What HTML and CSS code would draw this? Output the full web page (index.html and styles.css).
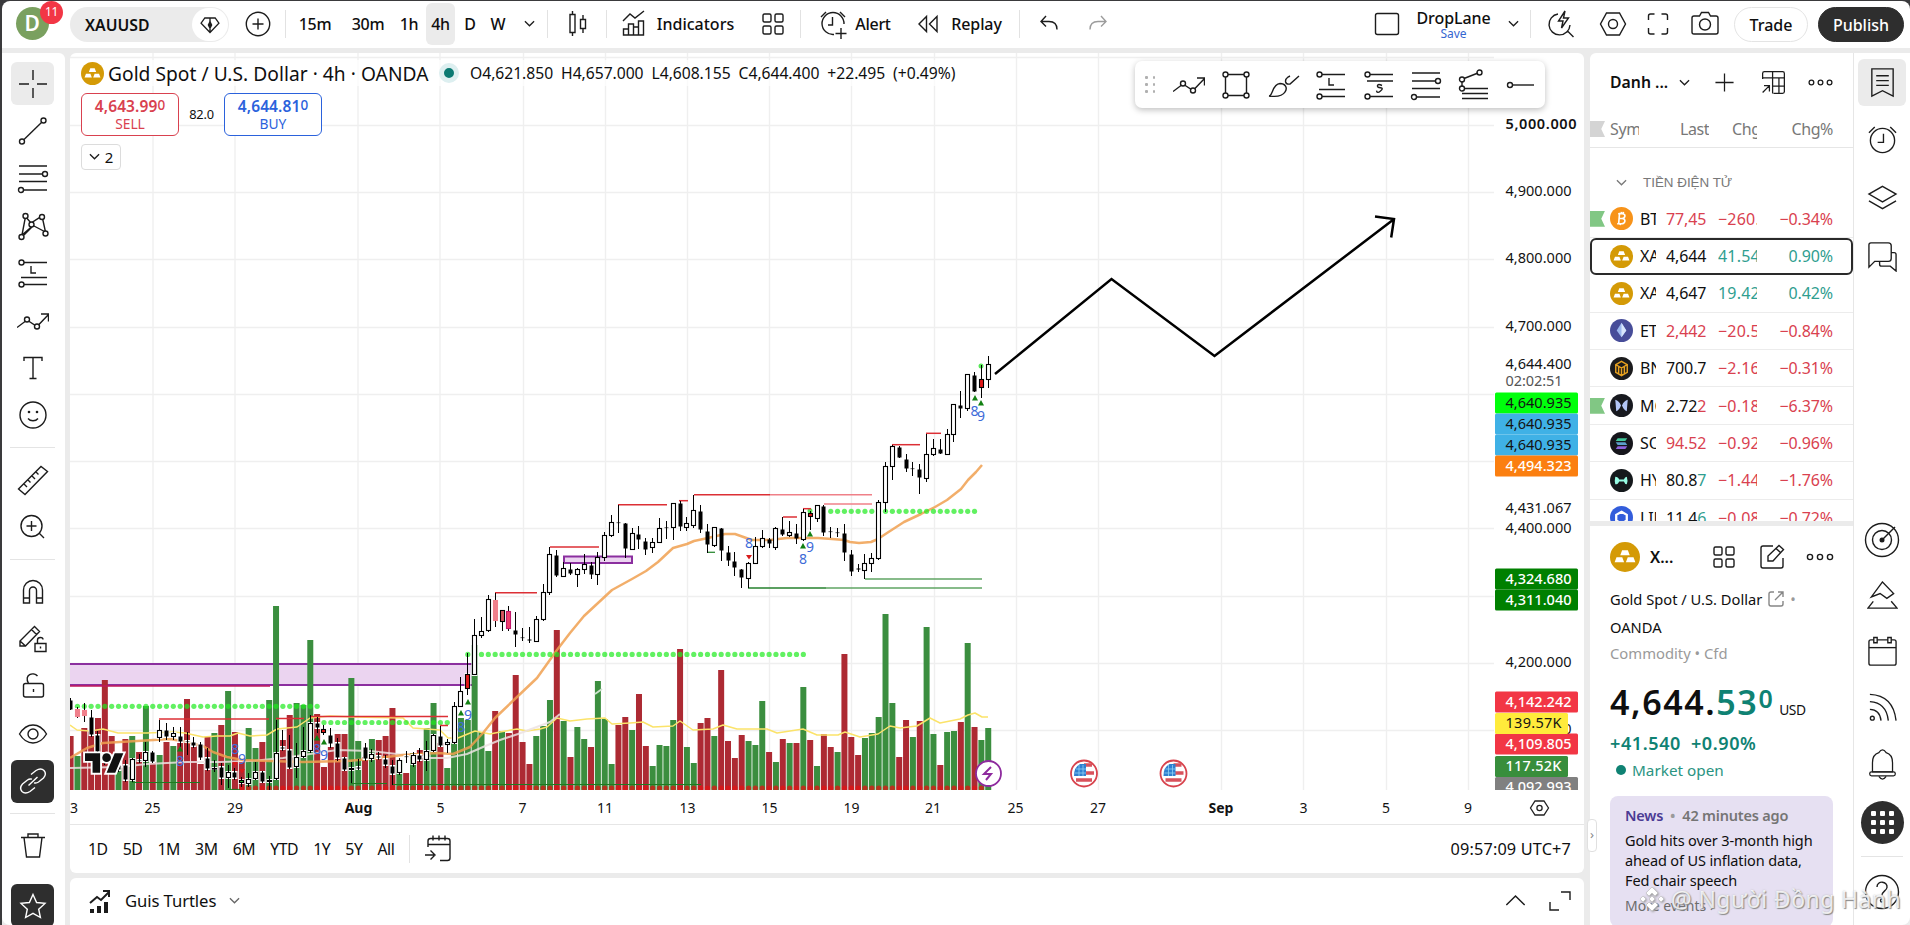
FILE: index.html
```html
<!DOCTYPE html>
<html lang="en">
<head>
  <meta charset="UTF-8">
  <meta name="viewport" content="width=device-width, initial-scale=1.0">
  <title>XAUUSD 4,644.400</title>
  <link rel="stylesheet" href="styles.css">
</head>
<body>
  <svg class="sprite" xmlns="http://www.w3.org/2000/svg">
    <symbol id="i-chev" viewBox="0 0 12 12"><path d="M1 3.5l5 5 5-5"/></symbol>
    <symbol id="i-plus" viewBox="0 0 32 32"><path d="M16 6v20M6 16h20"/></symbol>
    <symbol id="i-pluscircle" viewBox="0 0 32 32"><circle cx="16" cy="16" r="11.7"/><path d="M16 10.500v11M10.500 16h11"/></symbol>
    <symbol id="i-gem" viewBox="0 0 32 32"><path d="M10.500 8.500h11l4 5.500L16 24 6.500 14zM16 8.500v4M16 20v4"/><path class="solid" d="M16 11l2.500 5-2.500 5-2.500-5z"/></symbol>
    <symbol id="i-candles" viewBox="0 0 32 32"><path d="M8 6.500h5v18H8zM10.500 3v3.500M10.500 24.500V28M18.500 11.500h5v9h-5zM21 7v4.500M21 20.500V25"/></symbol>
    <symbol id="i-indic" viewBox="0 0 32 32"><path d="M5 13l7-7 5 4 9-7M5.500 27v-6h5v6zM10.500 27V16h5v11M15.500 27v-8h5v8M20.500 27V13h5v14H5"/></symbol>
    <symbol id="i-grid" viewBox="0 0 32 32"><rect x="6" y="6" width="8" height="8" rx="1.500"/><rect x="18" y="6" width="8" height="8" rx="1.500"/><rect x="6" y="18" width="8" height="8" rx="1.500"/><rect x="18" y="18" width="8" height="8" rx="1.500"/></symbol>
    <symbol id="i-alertplus" viewBox="0 0 32 32"><path d="M17 26.500A11 11 0 1 1 27 16M15.500 9v8H11M4 9l5-5M23 4l5 5M24 20v11M18.500 25.500h11"/></symbol>
    <symbol id="i-alarm" viewBox="0 0 32 32"><circle cx="16" cy="17" r="12.500"/><path d="M17 10v9h-6M2 9l6-6M24 3l6 6"/></symbol>
    <symbol id="i-replay" viewBox="0 0 32 32"><path d="M14.500 8.500v15L7 16zM25 8.500v15L17.500 16z"/></symbol>
    <symbol id="i-undo" viewBox="0 0 32 32"><path d="M12 8l-5 5.500 5 5M7 13.500h8c5 0 8 2.500 8 8"/></symbol>
    <symbol id="i-redo" viewBox="0 0 32 32"><path d="M20 8l5 5.500-5 5M25 13.500h-8c-5 0-8 2.500-8 8"/></symbol>
    <symbol id="i-square" viewBox="0 0 32 32"><rect x="4.500" y="5.500" width="23" height="21" rx="2"/></symbol>
    <symbol id="i-flash" viewBox="0 0 32 32"><path d="M13 6A10.500 10.500 0 1 0 25 17M22.500 23l6 6M20 3l-6.500 10h4.500l-1.500 7 7-10h-5z"/></symbol>
    <symbol id="i-hex" viewBox="0 0 32 32"><path d="M9.500 5h13L28.500 16l-6 11h-13L3.500 16z"/><circle cx="16" cy="16" r="4.500"/></symbol>
    <symbol id="i-full" viewBox="0 0 32 32"><path d="M6.500 12V8q0-2 2-2h4M19.500 6h4q2 0 2 2v4M25.500 20v4q0 2-2 2h-4M12.500 26h-4q-2 0-2-2v-4"/></symbol>
    <symbol id="i-camera" viewBox="0 0 32 32"><path d="M5 8h5.500l2-3.500h7l2 3.500H27q2 0 2 2v14q0 2-2 2H5q-2 0-2-2V10q0-2 2-2z"/><circle cx="16" cy="16.500" r="5.500"/></symbol>
    <symbol id="i-cross" viewBox="0 0 32 32"><path d="M16 2v10M16 20v10M2 16h10M20 16h10"/></symbol>
    <symbol id="i-line" viewBox="0 0 32 32"><circle cx="5" cy="26.500" r="2.500"/><circle cx="26.500" cy="5.500" r="2.500"/><path d="M7 24.500L24.500 7.500"/></symbol>
    <symbol id="i-fib" viewBox="0 0 32 32"><path d="M2 4h28M2 12h23.500M2 19.500h28M6.500 28H30"/><circle cx="28" cy="12" r="2.500"/><circle cx="4" cy="28" r="2.500"/></symbol>
    <symbol id="i-pattern" viewBox="0 0 32 32"><path d="M5 25L8.500 6.500 14 13l11-7 3.500 16L16 15.500zM7 25l8-8"/><circle class="hole" cx="8.500" cy="6" r="2.500"/><circle class="hole" cx="4.500" cy="27" r="2.500"/><circle class="hole" cx="14.500" cy="14.500" r="2.500"/><circle class="hole" cx="25" cy="7" r="2.500"/><circle class="hole" cx="28.500" cy="23.500" r="2.500"/></symbol>
    <symbol id="i-long" viewBox="0 0 32 32"><path d="M7 5.500h23M4 20.500h26M7 27.500h23M14 9v7h5"/><circle cx="4.500" cy="5.500" r="2.500"/><circle cx="4.500" cy="27.500" r="2.500"/></symbol>
    <symbol id="i-short" viewBox="0 0 32 32"><path d="M7 5.500h23M4 12h26M7 27.500h23M19 16.500q-4-2-4.500 0t3 2.300 0 3.200-4-.4"/><circle cx="4.500" cy="5.500" r="2.500"/><circle cx="4.500" cy="27.500" r="2.500"/></symbol>
    <symbol id="i-zig" viewBox="0 0 32 32"><path d="M0 22.500l10-7.500 10 6.500L31.500 9.500M24 9h7.500v7.500"/><circle class="hole" cx="10" cy="14.500" r="2.500"/><circle class="hole" cx="20" cy="21.500" r="2.500"/></symbol>
    <symbol id="i-text" viewBox="0 0 32 32"><path d="M7 9V5.500h18V9M16 5.500v21M12.500 26.500h7"/></symbol>
    <symbol id="i-smile" viewBox="0 0 32 32"><circle cx="16" cy="16" r="13"/><path d="M11 19.500c2.500 3 7.500 3 10 0"/><circle class="solid" cx="12" cy="13" r="1.300"/><circle class="solid" cx="20" cy="13" r="1.300"/></symbol>
    <symbol id="i-ruler" viewBox="0 0 32 32"><path d="M1.500 25L24 2.500l6.500 5L8 30.500zM7 20l3 3M11 16l2.500 2.500M15 12l3 3M19 8l2.500 2.500"/></symbol>
    <symbol id="i-zoom" viewBox="0 0 32 32"><circle cx="14.500" cy="15" r="10.500"/><path d="M22 22l5 5M14.500 10v10M9.500 15h10"/></symbol>
    <symbol id="i-magnet" viewBox="0 0 32 32"><path d="M6.500 27V14a9.500 9.500 0 0 1 19 0v13h-6V14.500a3.500 3.500 0 0 0-7 0V27zM6.500 22h6M19.500 22h6"/></symbol>
    <symbol id="i-penlock" viewBox="0 0 32 32"><path d="M3 23v-5L17.500 3.500l5 5L8.500 23zM14.500 6.500l5 5M3 18l5.500 5M18 20.500h11v8H18zM20.500 20.500V17q0-2.500 3-2.500 2.500 0 2.500 2M23.500 23.500v2"/></symbol>
    <symbol id="i-lock" viewBox="0 0 32 32"><rect x="6.500" y="13.500" width="20" height="13.500" rx="2"/><path d="M11.500 13.500c-5-9 5-12 9-7.500M16.500 19v3"/></symbol>
    <symbol id="i-eye" viewBox="0 0 32 32"><path d="M2.500 16q5.500-9 13.500-9t13.500 9q-5.500 9-13.500 9T2.500 16z"/><circle cx="16" cy="16" r="5"/></symbol>
    <symbol id="i-link" viewBox="0 0 32 32"><path d="M14 9.500l5-4q5-3 8 0 3 3.500-.5 7.500l-5 4q-2 1.500-4.500.8M18 22.500l-5 4q-5 3-8 0-3-3.500.5-7.500l5-4q2-1.500 4.500-.8M11.500 20.500l9-8.500"/></symbol>
    <symbol id="i-trash" viewBox="0 0 32 32"><path d="M4 7.500h24M7 7.500L9.500 27h13L25 7.500M11 7.500V4h10v3.500"/></symbol>
    <symbol id="i-star" viewBox="0 0 32 32"><path d="M16 4.500l3.600 8 8.400.9-6.300 5.800 1.700 8.300-7.400-4.200-7.400 4.200 1.700-8.300L4 13.400l8.400-.9z"/></symbol>
    <symbol id="i-rect" viewBox="0 0 32 32"><path d="M5.500 5.500h21v21h-21z"/><circle class="hole" cx="5.500" cy="5.500" r="2.500"/><circle class="hole" cx="26.500" cy="5.500" r="2.500"/><circle class="hole" cx="5.500" cy="26.500" r="2.500"/><circle class="hole" cx="26.500" cy="26.500" r="2.500"/></symbol>
    <symbol id="i-brush" viewBox="0 0 32 32"><path d="M1 27c4 0 3-12 11-12.500 5 0 8 4 5 8.500-2.500 4-9 5-16 4zM31 7l-9 8c-5 1-6-4-2-7l2-1"/></symbol>
    <symbol id="i-pitch" viewBox="0 0 32 32"><path d="M6 9.500L20 4M4 12v6M6.500 19.500H30M4 24.500h26M4 29.500h26"/><circle cx="4" cy="10.500" r="2.500"/><circle cx="21.500" cy="3.500" r="2.500"/><circle cx="4" cy="19.500" r="2.500"/></symbol>
    <symbol id="i-ray" viewBox="0 0 32 32"><circle cx="5" cy="16" r="2.500"/><path d="M7.500 16H29"/></symbol>
    <symbol id="i-table" viewBox="0 0 32 32"><path d="M4 12V6q0-2 2-2h20q2 0 2 2v20q0 2-2 2H16M4 11h24M15 4v24M22 11v17M15 20h13M4 27l7-7M5.500 19.500h6V26"/></symbol>
    <symbol id="i-dots" viewBox="0 0 32 32"><circle cx="6" cy="16" r="2.600"/><circle cx="16" cy="16" r="2.600"/><circle cx="26" cy="16" r="2.600"/></symbol>
    <symbol id="i-list" viewBox="0 0 32 32"><path d="M5 2h22v28l-11-5.500L5 30zM9.500 9h13M9.500 14h13M9.500 19h13"/></symbol>
    <symbol id="i-layers" viewBox="0 0 32 32"><path d="M16 4.500L30 12.500 16 20.500 2 12.500zM2 19.500l14 8 14-8"/></symbol>
    <symbol id="i-chat" viewBox="0 0 32 32"><path d="M4 2h18q3 0 3 3v13q0 3-3 3H8l-6 6V4q0-2 2-2zM25 12h3q2 0 2 2v17l-6-5H15q-2 0-2-2v-3"/></symbol>
    <symbol id="i-target" viewBox="0 0 36 36"><circle cx="18" cy="18" r="16.500"/><circle cx="18" cy="18" r="9.500"/><circle class="solid" cx="18" cy="18" r="2.500"/><path d="M18 18L31 5"/></symbol>
    <symbol id="i-mount" viewBox="0 0 32 32"><path d="M16 2L4.500 17.500l9-3.500 7 5 7-5zM6.500 22L1 29h30l-6-7"/></symbol>
    <symbol id="i-cal" viewBox="0 0 32 32"><rect x="2" y="4" width="28" height="26" rx="2"/><path d="M2 12h28"/><path class="hole" d="M7 1.500h3.500V7H7zM21.500 1.500H25V7h-3.500z"/></symbol>
    <symbol id="i-rss" viewBox="0 0 32 32"><circle cx="5.500" cy="27" r="2"/><path d="M3 18q10 0 11.500 11.500M3 10q17 1 19 19.500M3 2.500q24 1 27 27"/></symbol>
    <symbol id="i-bell" viewBox="0 0 32 34"><path d="M5 25V15q0-9 7-11 4-6 8 0 7 2 7 11v10z"/><rect x="2" y="25" width="28" height="4.500" rx="2"/><path d="M12 30q4 6 8 0"/></symbol>
    <symbol id="i-help" viewBox="0 0 36 36"><circle cx="18" cy="18" r="16.500"/><path d="M13 13c0-7 11-6 10 .5-.5 3.500-5 3.500-5 8"/><circle cx="18" cy="26.500" r="1.500"/></symbol>
    <symbol id="i-edit" viewBox="0 0 32 32"><path d="M17 5H7Q5 5 5 7v18q0 2 2 2h18q2 0 2-2v-8M12 20v-5L23 4.500l4.500 4L17 20zM20 7.500l4.500 4"/></symbol>
    <symbol id="i-goto" viewBox="0 0 32 32"><path d="M5 14V8q0-2.500 2.500-2.500h17Q27 5.500 27 8v17q0 2.500-2.500 2.500H17M5 11.500h22M10 2.500v5M16 2.500v5M22 2.500v5M2 22h9M7.500 17.500L12 22l-4.500 4.500"/></symbol>
    <symbol id="i-tester" viewBox="0 0 32 32"><path class="solid" d="M7 24h4v4H7zM14 21h4v7h-4zM21 17h4v11h-4z"/><path d="M7 18l7-6 4 3 8-8M20 6h6v6" stroke-width="2"/></symbol>
    <symbol id="i-expand" viewBox="0 0 32 32"><path d="M17 7h9v8M6 17v8h9"/></symbol>
    <symbol id="i-open" viewBox="0 0 16 16"><path d="M6 1H3Q1 1 1 3v10q0 2 2 2h10q2 0 2-2v-3M10 1h5v5M15 1L7 9"/></symbol>
    <symbol id="c-gold" viewBox="0 0 24 24"><circle cx="12" cy="12" r="12" fill="#d49a06"/><path d="M9.700 6.500h4.600l1.500 4H8.200zM5.200 12.200h4.600l1.500 4H3.700zM14.200 12.200h4.600l1.500 4h-7.600z" fill="#fff"/></symbol>
    <symbol id="c-btc" viewBox="0 0 24 24"><circle cx="12" cy="12" r="12" fill="#f7931a"/><path d="M10 6l-1 12M8.500 7h4.500q3 .5 2.500 2.700T12.500 12H9M12.500 12q3.500.3 3 3t-4 2.500H7.500M12 5l-.3 2M14 5l-.3 2M11 17l-.3 2" fill="none" stroke="#fff" stroke-width="1.700"/></symbol>
    <symbol id="c-eth" viewBox="0 0 24 24"><circle cx="12" cy="12" r="12" fill="#474d99"/><path d="M12 4l5 8-5 7-5-7z" fill="#9cb8ee"/><path d="M12 4v15l5-7z" fill="#d8e6fb"/></symbol>
    <symbol id="c-bnb" viewBox="0 0 24 24"><circle cx="12" cy="12" r="12" fill="#1b1b1d"/><path d="M12 4.500l6 3.500v8l-6 3.500L6 16V8zM6 8l6 3.500L18 8M12 11.500v8M9 9.700v7.500M15 9.700v7.500" fill="none" stroke="#e8a11f" stroke-width="1.500"/></symbol>
    <symbol id="c-morpho" viewBox="0 0 24 24"><circle cx="12" cy="12" r="12" fill="#17191f"/><path d="M5.500 6q4 1 6 6-2 5-5 6zM18.500 6q-4 1-6 6 2 5 5 6z" fill="#b3c6f7"/></symbol>
    <symbol id="c-sol" viewBox="0 0 24 24"><circle cx="12" cy="12" r="12" fill="#15151b"/><path d="M8 6.500h10l-2 2.800H6z" fill="#42c79a"/><path d="M6 10.700h10l2 2.800H8z" fill="#5b9fca"/><path d="M8 14.900h10l-2 2.800H6z" fill="#8d62dc"/></symbol>
    <symbol id="c-hype" viewBox="0 0 24 24"><circle cx="12" cy="12" r="12" fill="#15191c"/><path d="M5.500 8q3 0 4 3h5q1-3 3-3 1.500 4 0 8-2 0-3-3h-5q-1 3-4 3-1-4 0-8z" fill="#97fce4"/></symbol>
    <symbol id="c-link" viewBox="0 0 24 24"><circle cx="12" cy="12" r="12" fill="#335ddb"/><path d="M12 6l5.500 3.200v6L12 18.500l-5.500-3.300v-6z" fill="none" stroke="#fff" stroke-width="2.400"/></symbol>
  </svg>

  <header class="topbar">
    <div class="cell user"><span class="avatar">D</span><span class="badge">11</span></div>
    <div class="search"><b>XAUUSD</b><span class="gem"><svg class="ico"><use href="#i-gem"/></svg></span></div>
    <div class="cell sep"><svg class="ico"><use href="#i-pluscircle"/></svg></div>
    <div class="cell">15m</div>
    <div class="cell">30m</div>
    <div class="cell">1h</div>
    <div class="cell active">4h</div>
    <div class="cell">D</div>
    <div class="cell">W</div>
    <div class="cell sep"><svg class="chev"><use href="#i-chev"/></svg></div>
    <div class="cell sep"><svg class="ico"><use href="#i-candles"/></svg></div>
    <div class="cell indic"><svg class="ico"><use href="#i-indic"/></svg><span>Indicators</span></div>
    <div class="cell sep"><svg class="ico"><use href="#i-grid"/></svg></div>
    <div class="cell"><svg class="ico"><use href="#i-alertplus"/></svg><span>Alert</span></div>
    <div class="cell sep replay"><svg class="ico"><use href="#i-replay"/></svg><span>Replay</span></div>
    <div class="cell"><svg class="ico"><use href="#i-undo"/></svg></div>
    <div class="cell dim"><svg class="ico"><use href="#i-redo"/></svg></div>
    <div></div>
    <div class="cell"><svg class="ico"><use href="#i-square"/></svg></div>
    <div class="layout-name"><span>DropLane</span><small>Save</small></div>
    <div class="cell sep"><svg class="chev"><use href="#i-chev"/></svg></div>
    <div class="cell"><svg class="ico"><use href="#i-flash"/></svg></div>
    <div class="cell"><svg class="ico"><use href="#i-hex"/></svg></div>
    <div class="cell"><svg class="ico"><use href="#i-full"/></svg></div>
    <div class="cell"><svg class="ico"><use href="#i-camera"/></svg></div>
    <div class="pill">Trade</div>
    <div class="pill dark">Publish</div>
  </header>

  <div class="main">
    <nav class="tools">
      <div class="tool on"><svg class="ico"><use href="#i-cross"/></svg></div>
      <div class="tool"><svg class="ico"><use href="#i-line"/></svg></div>
      <div class="tool"><svg class="ico"><use href="#i-fib"/></svg></div>
      <div class="tool"><svg class="ico"><use href="#i-pattern"/></svg></div>
      <div class="tool"><svg class="ico"><use href="#i-long"/></svg></div>
      <div class="tool"><svg class="ico"><use href="#i-zig"/></svg></div>
      <div class="tool"><svg class="ico"><use href="#i-text"/></svg></div>
      <div class="tool"><svg class="ico"><use href="#i-smile"/></svg></div>
      <hr>
      <div class="tool"><svg class="ico"><use href="#i-ruler"/></svg></div>
      <div class="tool"><svg class="ico"><use href="#i-zoom"/></svg></div>
      <hr>
      <div class="tool"><svg class="ico"><use href="#i-magnet"/></svg></div>
      <div class="tool"><svg class="ico"><use href="#i-penlock"/></svg></div>
      <div class="tool"><svg class="ico"><use href="#i-lock"/></svg></div>
      <div class="tool"><svg class="ico"><use href="#i-eye"/></svg></div>
      <div class="tool black"><svg class="ico"><use href="#i-link"/></svg></div>
      <hr>
      <div class="tool"><svg class="ico"><use href="#i-trash"/></svg></div>
      <div class="tool black star"><svg class="ico"><use href="#i-star"/></svg></div>
    </nav>

    <section class="center">
      <div class="chart-panel">
        <svg id="chart" class="chart" viewBox="70 53 1514 771"></svg>

        <div class="legend">
          <div class="legend-title">
            <svg class="coin"><use href="#c-gold"/></svg>
            <span class="name">Gold Spot / U.S. Dollar · 4h · OANDA</span>
            <i class="status"></i>
            <span class="ohlc"><span>O4,621.850</span><span>H4,657.000</span><span>L4,608.155</span><span>C4,644.400</span><span>+22.495</span><span>(+0.49%)</span></span>
          </div>
          <div class="quotes">
            <div class="quote sell"><b>4,643.99<sup>0</sup></b><span>SELL</span></div>
            <span class="spread">82.0</span>
            <div class="quote buy"><b>4,644.81<sup>0</sup></b><span>BUY</span></div>
          </div>
          <div class="collapse"><svg class="chev"><use href="#i-chev"/></svg>2</div>
        </div>

        <div class="favorites">
          <div class="grip"><i></i><i></i><i></i><i></i><i></i><i></i></div>
          <div><svg class="ico"><use href="#i-zig"/></svg></div>
          <div><svg class="ico"><use href="#i-rect"/></svg></div>
          <div><svg class="ico"><use href="#i-brush"/></svg></div>
          <div><svg class="ico"><use href="#i-long"/></svg></div>
          <div><svg class="ico"><use href="#i-short"/></svg></div>
          <div><svg class="ico"><use href="#i-fib"/></svg></div>
          <div><svg class="ico"><use href="#i-pitch"/></svg></div>
          <div><svg class="ico"><use href="#i-ray"/></svg></div>
        </div>

        <div class="ranges">
          <span>1D</span><span>5D</span><span>1M</span><span>3M</span><span>6M</span><span>YTD</span><span>1Y</span><span>5Y</span><span>All</span>
          <div class="goto"><svg class="ico"><use href="#i-goto"/></svg></div>
          <div class="clock">09:57:09 UTC+7</div>
        </div>
      </div>

      <div class="tester">
        <svg class="ico"><use href="#i-tester"/></svg>
        <span>Guis Turtles</span>
        <svg class="chev"><use href="#i-chev"/></svg>
        <svg class="chev up"><use href="#i-chev"/></svg>
        <svg class="ico"><use href="#i-expand"/></svg>
      </div>
    </section>

    <aside class="side">
      <div class="watchlist">
        <div class="wl-head">
          <b>Danh ...</b>
          <svg class="chev"><use href="#i-chev"/></svg>
          <svg class="ico"><use href="#i-plus"/></svg>
          <svg class="ico"><use href="#i-table"/></svg>
          <svg class="ico"><use href="#i-dots"/></svg>
        </div>
        <div class="wl-cols"><i class="flag gray"></i><span class="sym">Symbol</span><span class="last">Last</span><span class="chg">Chg</span><span class="pct">Chg%</span></div>
        <div class="wl-section"><svg class="chev"><use href="#i-chev"/></svg>TIỀN ĐIỆN TỬ</div>
        <div id="wl-rows"></div>
      </div>

      <div class="details">
        <div class="d-head">
          <svg class="coin"><use href="#c-gold"/></svg>
          <b>X...</b>
          <svg class="ico"><use href="#i-grid"/></svg>
          <svg class="ico"><use href="#i-edit"/></svg>
          <svg class="ico"><use href="#i-dots"/></svg>
        </div>
        <div class="d-name">Gold Spot / U.S. Dollar <svg class="open"><use href="#i-open"/></svg><em>•</em></div>
        <div class="d-name">OANDA</div>
        <div class="d-type">Commodity • Cfd</div>
        <div class="d-price"><b>4,644.<span>53</span><sup>0</sup></b><small>USD</small></div>
        <div class="d-change"><span>+41.540</span><span>+0.90%</span></div>
        <div class="d-open"><i></i>Market open</div>
        <div class="news">
          <div class="n-head"><b>News</b><em>•</em>42 minutes ago</div>
          <div class="n-text">Gold hits over 3-month high<br>ahead of US inflation data,<br>Fed chair speech</div>
          <div class="n-more">More events ›</div>
        </div>
      </div>
    </aside>

    <nav class="rail">
      <div class="on"><svg><use href="#i-list"/></svg></div>
      <div class="tall"><svg><use href="#i-alarm"/></svg></div>
      <div class="tall"><svg><use href="#i-layers"/></svg></div>
      <div class="tall"><svg><use href="#i-chat"/></svg></div>
      <div class="push"><svg class="big"><use href="#i-target"/></svg></div>
      <div><svg><use href="#i-mount"/></svg></div>
      <div><svg><use href="#i-cal"/></svg></div>
      <div><svg><use href="#i-rss"/></svg></div>
      <div><svg><use href="#i-bell"/></svg></div>
      <div class="apps"><span><i></i><i></i><i></i><i></i><i></i><i></i><i></i><i></i><i></i></span></div>
      <hr>
      <div class="help"><svg class="big"><use href="#i-help"/></svg></div>
    </nav>
  </div>

  <div class="notch">›</div>
  <div class="watermark"><svg viewBox="0 0 28 28"><path d="M14 2l6 6-3 3-3-3-3 3-3-3zM5 11l3 3-3 3-3-3zM14 11l3 3-3 3-3-3zM23 11l3 3-3 3-3-3zM11 17l3 3 3-3 3 3-6 6-6-6z"/></svg><span>@ Người Đồng Hành</span></div>

  <script src="chart.js"></script>
</body>
</html>
```
FILE: styles.css
```css
* { box-sizing: border-box; }
body {
  margin: 0;
  width: 1910px; height: 925px;
  padding: 1px 0 0 2px;
  overflow: hidden;
  position: relative;
  background: #3a3a3c;
  color: #0f0f0f;
  font-family: "Noto Sans", "Open Sans", sans-serif;
  font-size: 16px;
}
svg {
  fill: none; stroke: #1c1c1c; stroke-width: 1.4;
  flex: none;
}
.sprite { position: absolute; width: 0; height: 0; }
.solid { fill: #1c1c1c; stroke: none; }
.hole { fill: #fff; }
.ico { width: 32px; height: 32px; }
.chev { width: 11px; height: 11px; }
symbol[id^="c-"] { stroke: none; }
hr { border: 0; height: 1px; background: #e4e4e4; width: 45px; margin: 8px 0; flex: none; }

/* top bar */
.topbar {
  height: 47px;
  background: #fff;
  border-radius: 8px 8px 0 0;
  display: grid;
  grid-template-columns: 68px 159px 57px 58px 48px 34px 29px 30px 26px 37px 59px 138px 56px 106px 113px 60px 34px 249px 48px 85px 35px 60px 43px 47px 48px 79px 96px;
  align-items: center;
}
.cell {
  height: 100%;
  display: flex; align-items: center; justify-content: center;
  gap: 6px;
  font-weight: 500;
  letter-spacing: -0.3px;
  position: relative;
  top: -1px;
}
.indic { gap: 7px; letter-spacing: 0; }
.replay { padding-right: 13px; gap: 7px; letter-spacing: -0.1px; }
.cell.sep::after {
  content: "";
  position: absolute; right: 0; top: 10px;
  width: 1px; height: 28px;
  background: #e2e2e2;
}
.cell.active { background: #ebebeb; border-radius: 6px; height: 42px; }
.dim svg { stroke: #9c9c9c; }
.avatar {
  width: 33px; height: 33px; border-radius: 50%;
  background: #7aa05f; color: #fff;
  font-size: 21px; font-weight: 600; line-height: 32px; text-align: center;
  margin-right: 8px;
}
.badge {
  position: absolute; left: 38px; top: 1px;
  width: 23px; height: 23px; border-radius: 50%;
  background: #f23645; color: #fff;
  font-size: 12px; font-weight: 400; line-height: 22px; text-align: center;
}
.search {
  height: 35px; border-radius: 18px;
  background: #ebebeb;
  display: flex; align-items: center; justify-content: space-between;
  padding: 0 1px 0 15px;
}
.search b { font-weight: 600; font-size: 15.8px; letter-spacing: 0; }
.gem {
  width: 36px; height: 33px; border-radius: 18px; background: #fff;
  display: flex; align-items: center; justify-content: center;
}
.gem .ico { width: 30px; height: 30px; }
.layout-name {
  display: flex; flex-direction: column; align-items: center;
  font-weight: 500; line-height: 18px; letter-spacing: -0.1px;
}
.layout-name small { color: #3566d0; font-size: 12px; font-weight: 400; line-height: 13px; }
.pill {
  height: 35px; margin-left: 5px;
  border: 1px solid #e4e4e4; border-radius: 18px;
  display: flex; align-items: center; justify-content: center;
  font-weight: 500; letter-spacing: 0;
}
.pill.dark { margin-left: 10px; background: #2e2e2e; border-color: #2e2e2e; color: #fff; }

/* body of the page */
.main {
  height: 877px;
  background: #ebebeb;
  padding-top: 5px;
  display: flex;
}
.tools {
  width: 63px;
  background: #fff;
  border-radius: 0 6px 0 8px;
  padding: 7px 2px 0 0;
  margin-right: 5px;
  display: flex; flex-direction: column; align-items: center;
}
.tool {
  width: 43px; height: 47.4px; flex: none;
  display: flex; align-items: center; justify-content: center;
}
.tool.on, .tool.black { height: 43px; margin: 2.2px 0; border-radius: 6px; background: #ebebeb; }
.tool.black { background: #2e2e2e; }
.tool.black svg { stroke: #fff; }
.tool.star { margin-top: 15px; }

.center { width: 1514px; margin-right: 6px; display: flex; flex-direction: column; gap: 5px; }
.chart-panel {
  position: relative;
  background: #fff;
  border-radius: 6px;
  height: 820px;
}
.chart { display: block; width: 1514px; height: 771px; stroke: none; }
.chart text { font-size: 14.5px; fill: #131313; }

/* legend lies over the chart */
.legend { position: absolute; left: 11px; top: 7px; }
.legend-title { display: flex; align-items: center; height: 26px; background: rgba(255,255,255,.7); }
.coin { width: 23px; height: 23px; stroke: none; }
.legend-title .name { font-size: 19.2px; margin-left: 4px; width: 320px; white-space: nowrap; letter-spacing: 0.03px; }
.status {
  width: 20px; height: 20px; margin: 0 11px; border-radius: 50%;
  background: #0b7a72; border: 5px solid #ddeff0;
}
.ohlc { display: flex; gap: 8px; font-size: 15.7px; letter-spacing: -0.04px; }
.quotes { display: flex; align-items: center; margin-top: 6.5px; }
.quote {
  width: 98px; height: 43px;
  border: 1.5px solid; border-radius: 6px;
  background: #fff;
  display: flex; flex-direction: column; align-items: center; justify-content: center;
  font-size: 13.8px; line-height: 17px;
}
.quote b { font-size: 15.5px; font-weight: 600; line-height: 18px; letter-spacing: 0.1px; }
.quote sup { font-size: 13.5px; line-height: 0; vertical-align: 2px; font-weight: 500; }
.sell { color: #d9414f; }
.buy { color: #2b62dc; }
.spread { width: 45px; text-align: center; font-size: 12.8px; letter-spacing: -0.2px; }
.collapse {
  width: 40px; height: 26px; margin-top: 8px;
  border: 1px solid #dcdcdc; border-radius: 4px; background: #fff;
  display: flex; align-items: center; justify-content: center; gap: 5px;
  font-size: 15px;
}

.favorites {
  position: absolute; left: 1065px; top: 8px;
  width: 410px; height: 47px;
  background: #fff; border-radius: 7px;
  box-shadow: 0 2px 6px rgba(0,0,0,.25);
  display: grid; grid-template-columns: 30px repeat(8, 47.5px);
  align-items: center; justify-items: center;
}
.favorites div { display: flex; }
.favorites .grip { display: grid; grid-template-columns: 2.5px 2.5px; gap: 4.5px 5px; }
.grip i { width: 2.5px; height: 2.5px; background: #b0b0b0; border-radius: 1px; }

.ranges {
  height: 49px;
  border-top: 1px solid #e6e6e6;
  display: flex; align-items: center;
  padding: 0 13px 1px 18px;
  gap: 15.2px;
  font-size: 15.8px;
  letter-spacing: -0.5px;
}
.goto { border-left: 1px solid #e2e2e2; height: 28px; padding-left: 13px; display: flex; align-items: center; }
.clock { margin-left: auto; letter-spacing: 0.15px; font-size: 16.3px; }

.tester {
  flex: 1;
  background: #fff;
  border-radius: 6px 6px 0 0;
  display: flex; align-items: center;
  padding: 0 8px 2px 13px;
}
.tester span { margin: 0 13px 0 10px; font-size: 16.7px; letter-spacing: -0.1px; }
.tester .chev { stroke: #666; }
.tester .up { transform: scale(2, -2); margin: 0 23px 0 auto; stroke: #1c1c1c; stroke-width: .8; }

/* watchlist + symbol details */
.side { width: 263px; display: flex; flex-direction: column; gap: 5px; }
.watchlist { height: 468px; flex: none; background: #fff; overflow: hidden; border-radius: 6px 0 0 0; }
.wl-head { display: grid; grid-template-columns: 60px 28px 52px 46px 48px; align-items: center; justify-items: center; height: 58px; padding-left: 20px; }
.wl-head b { font-weight: 600; font-size: 15.8px; white-space: nowrap; justify-self: start; }
.wl-head .ico { width: 29px; height: 29px; }
.wl-cols, .wl-row {
  display: grid;
  grid-template-columns: 20px 29px 20px 8px 42px 8px 40px 1fr;
  padding-right: 20px;
  align-items: center;
  overflow: hidden; white-space: nowrap;
}
.wl-cols { height: 37px; border-bottom: 1px solid #e6e6e6; color: #787878; font-size: 16px; letter-spacing: -0.4px; }
.flag { grid-column: 1; width: 15px; height: 16px; background: #81c784; clip-path: polygon(0 0, 100% 0, 75% 50%, 100% 100%, 0 100%); }
.flag.gray { background: #d4d4d4; }
.wl-cols .sym { grid-column: 2; overflow: hidden; width: 29px; }
.wl-cols .last { grid-column: 5; justify-self: end; width: 29px; overflow: hidden; }
.wl-cols .chg { grid-column: 7; justify-self: end; width: 25px; overflow: hidden; }
.pct { grid-column: 8; justify-self: end; }
.wl-section {
  height: 52.5px; padding: 16px 0 0 26px;
  display: flex; align-items: center; gap: 16px;
  color: #787878;
  font-family: "Liberation Sans", "Noto Sans", sans-serif; font-size: 13.4px;
}
.wl-section svg { stroke: #787878; }
.wl-row { height: 37.4px; border-bottom: 1px solid #ececec; font-size: 16px; letter-spacing: -0.1px; }
.wl-row.selected { outline: 2px solid #2a2a2a; outline-offset: -2px; border-radius: 6px; }
.wl-row .coin { grid-column: 2; }
.wl-row .sym { grid-column: 3; width: 16px; margin-left: 1px; overflow: hidden; }
.wl-row .last { grid-column: 5; overflow: hidden; margin-left: -1px; }
.wl-row .chg { grid-column: 7; overflow: hidden; width: 39px; margin-left: 1px; letter-spacing: 0.2px; }
.down { color: #d9414f; }
.up-c { color: #2f9e90; }

.details { flex: 1; background: #fff; padding: 15px 20px 0 20px; }
.d-head { height: 30px; display: grid; grid-template-columns: 40px 50px 48px 48px 48px; align-items: center; }
.d-head .coin { width: 30px; height: 30px; }
.d-head b { font-weight: 600; font-size: 16px; }
.d-head .ico { margin-left: 8px; }
.d-name { height: 28px; display: flex; align-items: center; font-size: 14.7px; letter-spacing: 0; white-space: nowrap; }
.d-head + .d-name { margin-top: 14px; }
.open { width: 16px; height: 16px; stroke: #868686; margin: 0 6px 0 6px; }
.d-name em, .n-head em { font-style: normal; color: #9a9a9a; }
.d-type { height: 26px; line-height: 25px; font-size: 14.8px; color: #9a9a9a; }
.d-price { margin-top: 7px; height: 44px; display: flex; align-items: baseline; line-height: 56px; white-space: nowrap; }
.d-price b { font-size: 34px; font-weight: 600; letter-spacing: 1.6px; }
.d-price span, .d-price sup { color: #0f8273; }
.d-price sup { font-size: 25px; line-height: 0; vertical-align: 7px; }
.d-price small { font-size: 13.8px; margin-left: 5px; letter-spacing: -0.5px; }
.d-change { margin-top: 11px; height: 28px; line-height: 28px; display: flex; gap: 10px; font-size: 18px; font-weight: 600; letter-spacing: 0.6px; color: #0f8273; }
.d-open { height: 25px; display: flex; align-items: center; font-size: 15.3px; color: #2b9482; }
.d-open i { width: 10px; height: 10px; border-radius: 50%; background: #0f8273; margin: 0 6px; }
.news { margin-top: 14px; height: 131px; padding: 9px 15px; border-radius: 8px; background: #e6e0f2; font-size: 14.5px; line-height: 20px; white-space: nowrap; }
.n-head { font-weight: 600; color: #757575; height: 25px; line-height: 21px; letter-spacing: -0.2px; }
.n-head b { font-weight: 600; color: #4b3b94; }
.n-head em { margin: 0 7px; }
.n-text { letter-spacing: -0.13px; }
.n-more { margin-top: 6px; color: #6c6c6c; font-size: 14px; }

/* right icon rail */
.rail {
  flex: 1;
  background: #fff;
  border-left: 1px solid #e6e6e6;
  border-radius: 0 0 8px 0;
  padding-top: 6px;
  display: flex; flex-direction: column; align-items: center;
}
.rail svg { width: 31px; height: 31px; }
.rail svg.big { width: 36px; height: 36px; }
.rail div { width: 48px; height: 56.2px; flex: none; display: flex; align-items: center; justify-content: center; }
.rail .on { height: 47px; margin-bottom: 4px; background: #ebebeb; border-radius: 6px; }
.rail .tall { height: 58.5px; }
.rail .push { margin-top: 226px; height: 56px; }
.rail .apps { height: 60px; }
.apps span {
  width: 43px; height: 43px; border-radius: 50%; background: #2e2e2e;
  display: grid; grid-template-columns: repeat(3, 5px); gap: 4px; place-content: center;
}
.apps i { width: 5px; height: 5px; border-radius: 1px; background: #fff; }
.rail hr { width: 42px; margin: 4px 0 7px; }

.notch {
  position: absolute; left: 1587px; top: 819px;
  width: 10px; height: 33px;
  background: #fff; border: 1px solid #e0e0e0; border-radius: 4px;
  font-size: 13px; line-height: 28px; text-align: center; color: #888;
}
.watermark {
  position: absolute; left: 1638px; top: 881px;
  display: flex; align-items: center; gap: 5px;
  color: rgba(255,255,255,.8);
  font-size: 23px; letter-spacing: 0.4px; white-space: nowrap;
  line-height: 36px;
  text-shadow: 1px 1px 1px #8a8a8a, 0 0 2px #bbb;
}
.watermark svg { width: 28px; height: 28px; fill: #fff; stroke: #b8b8b8; stroke-width: .6; filter: drop-shadow(1px 1px 1px #999); }
```
FILE: chart.js
```js
const NS = 'http://www.w3.org/2000/svg';
const chart = document.getElementById('chart');
const BASE = 790;
const barX = i => 70.6 + 6.848 * i;

function add(tag, attrs, text) {
  const el = document.createElementNS(NS, tag);
  for (const k in attrs) el.setAttribute(k, attrs[k]);
  if (text !== undefined) el.textContent = text;
  chart.appendChild(el);
  return el;
}
function hline(x1, x2, y, color, w) {
  add('path', { d: `M${x1} ${y}H${x2}`, stroke: color, 'stroke-width': w || 1.3 });
}
function curve(points, color, w) {
  add('polyline', { points, fill: 'none', stroke: color, 'stroke-width': w, 'stroke-linejoin': 'round' });
}

// grid
[153, 235, 358, 440, 523.5, 605.5, 687.5, 769.5, 851.5, 934.5, 1016.5, 1098.5, 1221.5, 1303.5, 1386.5, 1468.5]
  .forEach(x => add('path', { d: `M${x} 53V${BASE}`, stroke: '#efefef' }));
[57.5, 125.5, 192.5, 259.5, 327.5, 394.5, 461.5, 528.5, 596.5, 663.5, 730.5]
  .forEach(y => add('path', { d: `M70 ${y}H1494`, stroke: '#efefef' }));

// supply zones
add('rect', { x: 70, y: 664, width: 402, height: 21, fill: '#ebd4f0' });
hline(70, 472, 664, '#8b2f9f', 2);
hline(70, 472, 685, '#8b2f9f', 2);

// volume, R = down, G = up, number = bar height
const volume = 'R54 G34 R62 R59 R72 R110 R54 G24 R51 G54 R38 G84 R28 G35 R48 G44 R47 R91 R45 R26 R53 G57 R65 G99 R58 R28 G62 G42 R48 G90 G184 R50 R75 G87 G85 G150 R76 R23 R43 R56 R56 G112 G49 R33 G51 R50 R54 R82 G30 R17 G37 R40 G62 G87 R47 G22 G47 G72 G70 G145 G58 G39 R79 G59 R57 R115 R48 R26 G54 G64 G90 R160 G69 R33 G63 G51 R43 G109 G71 G26 R65 R73 G60 R96 R44 G24 G45 G44 G70 R141 G43 G27 R67 R72 G54 R120 R49 R32 R55 G49 G45 G89 R38 G28 R51 G47 R47 G103 R50 G24 R56 R43 G38 R136 R53 R35 G52 G57 G73 G176 G87 R33 R70 G53 R69 G163 G56 R25 G58 G59 R68 G147 R63 G50 G62'.split(' ');
volume.forEach((v, i) => {
  const h = +v.slice(1);
  add('rect', { x: barX(i) - 3, y: BASE - h, width: 6, height: h, fill: v[0] === 'R' ? '#ad2a33' : '#3b8e3f' });
});
hline(70, 270, 686, '#c2185b', 1.6);

// averages
curve('70,725 77,730 90,731 103,729 118,733 147,733 173,732 185,733 203,737 217,736 230,736 238,733 250,736 267,735 277,729 297,727 310,718 330,716 353,717 403,718 413,728 440,730 448,738 458,738 475,731 490,734 500,732 517,729 527,731 540,729 547,727 557,718 570,721 587,719 605,718 612,724 630,723 643,722 653,727 673,726 680,721 693,730 713,729 723,725 737,729 767,729 777,733 803,729 817,735 838,735 845,732 860,737 878,734 890,726 900,728 917,726 930,718 940,723 960,719 968,715 975,713 982,717 988,717', '#fbe36a', 1.5);
curve('70,768 120,767 147,764 187,762 220,762 250,761 283,758 317,753 337,750 370,751 397,754 430,758 447,758 467,754 483,747 500,740 518,734 550,722 560,714', 'rgba(236,226,226,.85)', 2);
curve('595,694 602,689', '#cfe3cf', 1.8);
curve('70,758 87,748 103,743 137,741 170,739 187,742 203,746 213,752 227,757 243,760 270,761 303,762 347,761 370,759 403,755 437,753 453,754 470,747 483,733 495,718 517,697 537,678 557,650 570,633 584,616 612,590 632,579 646,571 658,562 673,548 687,544 694,541 708,538 725,534 735,534 752,540 770,540 787,538 818,538 832,539 844,540 850,542 859,543 871,542 878,539 887,533 904,522 921,514 935,507 947,500 961,489 968,480 976,472 982,465', 'rgba(240,160,80,.85)', 2.5);

// stop dots
function dots(from, to, y, color, skip) {
  for (let i = from; i <= to; i++) if (i !== skip) add('circle', { cx: barX(i), cy: y, r: 2.6, fill: color });
}
dots(1, 36, 706.3, 'rgba(30,235,30,.7)');
dots(37, 55, 722.5, 'rgba(30,235,30,.7)');
dots(58, 107, 654.4, 'rgba(30,235,30,.7)');
dots(111, 132, 511.3, 'rgba(30,235,30,.7)', 118);
dots(25, 133, 788, 'rgba(225,20,20,.75)');
[[810, 510.7], [981, 366]].forEach(d => add('circle', { cx: d[0], cy: d[1], r: 2.5, fill: '#58e858' }));

// swing highs and lows
[[159, 269, 719], [276, 304, 718.5], [310, 448, 716.5], [440, 448, 725.5], [495, 537, 592.7], [550, 599, 547], [618, 667, 504.7],
 [679, 688, 500.7], [694, 770, 494.7], [783, 797, 517], [803, 811, 508.7], [892, 920, 444.7], [926, 941, 433.3]]
  .forEach(l => hline(l[0], l[1], l[2], '#dc2f35', 1.5));
hline(770, 872, 494.7, '#ef8088', 1.4);
hline(824, 872, 504, '#ef8088', 1.4);
hline(708, 715, 552.3, '#2e8b36');
hline(748, 826, 588, '#24802c', 1.5);
hline(826, 982, 588, '#5fa563', 1.5);
hline(865, 982, 579, '#5fa563', 1.5);
hline(132, 200, 782.5, '#1d7d20', 1);
hline(229, 240, 789.4, '#1d7d20', 1);
hline(351, 387, 783.5, '#1d7d20', 1);
hline(392, 701, 784.5, '#1d7d20', 1);

add('rect', { x: 564, y: 556.5, width: 68, height: 6.5, fill: '#ebd4f0', stroke: '#8b2f9f', 'stroke-width': 2 });

// candles: high, body top, body bottom, low, kind
const candles = `698 700 710 710 b|707 709 717 718 p|703 710 716 722 p|710 717 735 737 b|731 735 752 760 b|752 753 762 765 b|760 762 768 770 b|763 765 770 772 b|760 765 780 782 b|758 759 780 782 w|754 760 761 763 b|742 752 761 767 w|751 752 762 763 b|720 730 738 742 w|723 730 737 740 b|727 733 737 740 w|727 736 742 747 b|732 741 742 755 b|737 742 746 748 b|742 744 758 760 b|748 758 769 771 b|760 768 769 772 w|763 767 778 785 b|765 772 778 788 w|768 772 778 780 b|777 780 783 787 g|773 779 784 787 w|762 772 779 780 w|771 772 782 783 b|776 780 782 790 w|720 753 779 780 w|730 747 749 751 b|735 750 768 769 b|743 757 767 778 w|727 751 757 758 w|715 723 751 753 w|717 723 728 733 b|725 729 733 735 r|728 735 744 748 b|738 743 758 761 b|757 758 770 771 b|762 768 770 783 w|759 767 769 770 b|743 747 759 761 b|749 754 759 762 w|752 756 758 760 b|755 759 765 768 b|760 766 774 785 b|758 760 773 775 w|751 756 757 763 b|752 755 764 767 w|748 755 760 762 b|741 751 760 771 w|734 735 751 752 w|726 736 746 747 b|739 742 745 753 w|702 706 743 744 w|677 691 707 707 w|653 674 689 695 r|619 635 675 675 w|617 631 636 638 w|595 599 631 632 w|593 600 621 627 p|610 610 622 631 r2|606 611 629 631 c|612 630 635 647 b|628 637 638 641 b|627 639 641 643 b|616 619 642 642 w|584 592 620 621 w|547 554 593 595 w|550 555 576 577 b|562 568 577 577 w|563 569 574 575 b|568 569 575 587 w|554 564 570 574 w|562 565 575 579 b|552 557 575 585 w|532 535 558 561 w|515 522 536 537 w|505 522 523 533 b|523 523 549 558 b|528 533 550 550 w|526 534 540 549 b|538 541 550 555 b|538 542 548 553 w|518 528 543 543 w|521 527 528 539 b|503 503 528 540 w|501 503 527 531 b|517 523 528 531 w|495 510 526 528 w|505 511 530 533 b|524 531 545 553 b|527 527 546 547 w|528 528 551 561 b|546 552 561 566 b|552 561 568 576 b|569 569 578 588 b|562 563 579 588 w|537 546 564 564 w|530 538 547 548 w|538 539 544 548 b|527 528 548 550 w|517 529 535 536 b|521 532 536 537 w|524 533 539 544 b|509 512 540 541 w|511 513 517 530 r|505 505 519 522 w|505 506 533 536 b|527 531 532 538 b|528 532 533 537 b|524 533 553 561 b|550 554 572 576 b|564 568 570 572 b|554 563 571 579 w|553 558 564 572 w|500 502 559 560 w|462 466 503 512 w|445 446 467 480 w|446 447 458 458 b|454 459 469 472 b|462 468 469 476 b|464 469 478 494 b|434 454 479 482 w|439 448 455 456 w|439 449 454 454 b|429 434 455 455 w|404 404 435 442 w|391 405 409 418 b|374 374 409 411 w|372 375 392 392 b|365 379 388 398 r|356 364 380 388 w`;
const fills = { w: '#fff', b: '#000', r: '#e11919', r2: '#d6565d', p: '#f07f8b', c: '#f0406a', g: '#25b52c' };
candles.split('|').forEach((row, i) => {
  const [h, t, b, l, kind] = row.split(' ');
  const x = Math.round(barX(i) - 0.5) + 0.5;
  if (i < 60) add('rect', { x: x - 3, y: t - 1, width: 6, height: b - t + 2, fill: '#fff' });
  add('path', { d: `M${x} ${h}V${l}`, stroke: '#000', 'stroke-width': 1 });
  const edge = { p: '#f07f8b', c: '#c2186b' }[kind] || '#000';
  add('rect', { x: x - 2, y: +t + 0.5, width: 4, height: Math.max(b - t - 1, 0.6), fill: fills[kind], stroke: kind === 'b' ? 'none' : edge, 'stroke-width': 1.1 });
});

// sequential count marks
function tri(x, y, up) {
  add('path', { d: up ? `M${x - 3} ${y + 2.5}h6l-3-5.500z` : `M${x - 3} ${y - 2}h6l-3 4.500z`, fill: up ? '#128012' : '#d81b1b' });
}
[[180, 749], [317, 738], [324, 742], [468, 702], [461, 713], [803, 546], [810, 534], [975, 398], [981, 403]].forEach(p => tri(p[0], p[1], true));
[[235, 764], [242, 771], [749, 557]].forEach(p => tri(p[0], p[1], false));
[[180, 761, 8], [235, 749, 8], [242, 759, 9], [317, 749, 8], [324, 755, 9], [461, 727, 8], [468, 715, 9],
 [749, 543, 8], [803, 559, 8], [810, 547, 9], [974.5, 411, 8], [981, 416, 9]].forEach(p => {
  add('text', { x: p[0], y: p[1] + 5, 'text-anchor': 'middle', style: 'font-size:14px;fill:#3d6bd8' }, p[2]);
});

// projected path
add('path', { d: 'M995 374L1111.500 279L1214.500 356L1393.500 219.500M1375 216.500L1394 219L1391.200 237.500', fill: 'none', stroke: '#000', 'stroke-width': 2.5 });

// TV logo
const logo = 'M14 22H7V11H0V4h14v18zM28 22h-8l7.500-18h8L28 22z';
[['#fff', 3.5], ['none', 0]].forEach(s => {
  add('path', { d: logo, transform: 'translate(85 749) scale(1.08)', fill: '#111', stroke: s[0], 'stroke-width': s[1] });
  add('circle', { cx: 20, cy: 8, r: 4, transform: 'translate(85 749) scale(1.08)', fill: '#111', stroke: s[0], 'stroke-width': s[1] });
});

// events on the time scale
add('circle', { cx: 988.5, cy: 773.5, r: 12.5, fill: '#fff', stroke: '#8e2a9e', 'stroke-width': 1.8 });
add('path', { d: 'M991 767l-7 7h7l-5 6', fill: 'none', stroke: '#8e2a9e', 'stroke-width': 2 });
[1084, 1173.5].forEach(x => {
  add('circle', { cx: x, cy: 773.5, r: 13, fill: '#fff', stroke: '#d8434d', 'stroke-width': 1.8 });
  add('path', { d: `M${x} 765h8M${x} 773h10M${x - 8} 780h16`, stroke: '#d8525c', 'stroke-width': 3.4 });
  add('path', { d: `M${x + 2} 764h-6q-6 3-6 12h12z`, fill: '#2f80d0' });
  add('path', { d: `M${x - 8} 769h10M${x - 9} 773h11M${x - 5} 765v11M${x - 1} 765v11`, stroke: '#8fd0f5', 'stroke-width': .8 });
});

// price scale
function price(y, text, opt) {
  const o = opt || {};
  if (o.bg) add('rect', { x: 1495, y: y - 10.5, width: o.w || 83, height: 21, fill: o.bg, rx: 1.5 });
  add('text', { x: 1505.5, y: y + 4.9, textLength: o.len || 66, style: `fill:${o.color || '#131313'};font-weight:${o.bold || 400}` }, text);
}
price(124, '5,000.000', { bold: 600, len: 71 });
price(191, '4,900.000'); price(258, '4,800.000'); price(326, '4,700.000');
price(364, '4,644.400'); price(381.5, '02:02:51', { color: '#555', len: 57 });
price(403, '4,640.935', { bg: '#00ff0c' });
price(424, '4,640.935', { bg: '#3fb1e6' });
price(445, '4,640.935', { bg: '#3fb1e6' });
price(466, '4,494.323', { bg: '#fb7f10', color: '#fff', bold: 500 });
price(508, '4,431.067'); price(528, '4,400.000');
price(579, '4,324.680', { bg: '#008000', color: '#fff', bold: 500 });
price(600, '4,311.040', { bg: '#008000', color: '#fff', bold: 500 });
price(662, '4,200.000'); price(729, '4,100.000');
price(787.5, '4,092.993', { bg: '#808080', color: '#fff', bold: 500 });
price(766.5, '117.52K', { bg: '#388e3c', color: '#fff', w: 73, len: 56, bold: 500 });
price(702, '4,142.242', { bg: '#f23645', color: '#fff', bold: 500 });
price(744, '4,109.805', { bg: '#f23645', color: '#fff', bold: 500 });
price(723.5, '139.57K', { bg: '#ffeb3b', w: 73, len: 56 });

// time scale
add('rect', { x: 70, y: BASE, width: 1514, height: 34, fill: '#fff' });
[[74, '3'], [152.500, '25'], [235, '29'], [358.500, 'Aug'], [440.500, '5'], [522.500, '7'], [605, '11'], [687.500, '13'], [769.500, '15'], [851.500, '19'],
 [933, '21'], [1015.500, '25'], [1098, '27'], [1221, 'Sep'], [1303.500, '3'], [1386, '5'], [1468, '9']].forEach(t => {
  add('text', { x: t[0], y: 812.5, 'text-anchor': 'middle', style: `font-size:14px;font-weight:${/[A-Z]/.test(t[1]) ? 700 : 400}` }, t[1]);
});
add('path', { d: 'M1535 801h9l4.500 7-4.500 7h-9l-4.500-7z', fill: 'none', stroke: '#222', 'stroke-width': 1.3 });
add('circle', { cx: 1539.5, cy: 808, r: 2.6, fill: 'none', stroke: '#222', 'stroke-width': 1.3 });

// watchlist: icon, symbol, last, tail of last in another colour, change, percent, flag
const watch = [
  ['btc', 'BTC', '', '77,45', 'down', '−260.5', '−0.34%', 1],
  ['gold', 'XAU', '4,644', '', '', '41.540', '0.90%', 0],
  ['gold', 'XAU', '4,647', '', '', '19.420', '0.42%', 0],
  ['eth', 'ETH', '', '2,442', 'down', '−20.55', '−0.84%', 0],
  ['bnb', 'BNB', '700.7', '', '', '−2.16', '−0.31%', 0],
  ['morpho', 'MO', '2.72', '2', 'down', '−0.185', '−6.37%', 1],
  ['sol', 'SOL', '', '94.52', 'down', '−0.920', '−0.96%', 0],
  ['hype', 'HYP', '80.8', '7', 'up-c', '−1.449', '−1.76%', 0],
  ['link', 'LINK', '11.4', '6', 'up-c', '−0.083', '−0.72%', 0]
];
document.getElementById('wl-rows').innerHTML = watch.map((w, i) => {
  const dir = w[5][0] === '−' ? 'down' : 'up-c';
  return `<div class="wl-row${i === 1 ? ' selected' : ''}">${w[7] ? '<i class="flag"></i>' : ''}
    <svg class="coin"><use href="#c-${w[0]}"/></svg><span class="sym">${w[1]}</span>
    <span class="last">${w[2]}<span class="${w[4]}">${w[3]}</span></span>
    <span class="chg ${dir}">${w[5]}</span><span class="pct ${dir}">${w[6]}</span></div>`;
}).join('');
```
